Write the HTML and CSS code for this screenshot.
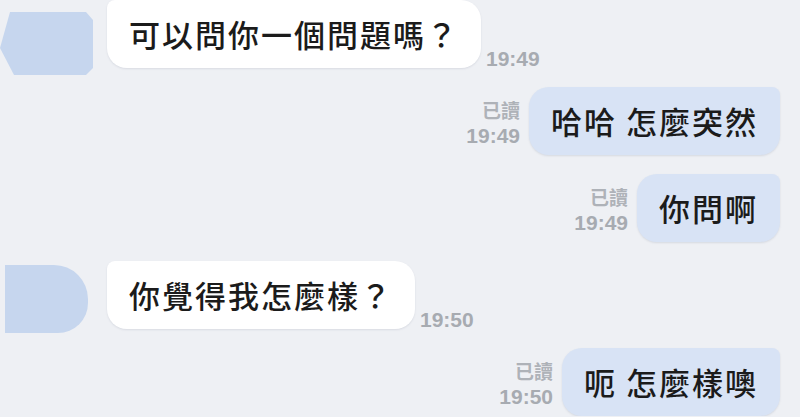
FILE: index.html
```html
<!DOCTYPE html>
<html lang="zh-Hant">
<head>
  <meta charset="UTF-8" />
  <meta name="viewport" content="width=device-width, initial-scale=1.0"/>
  <title>聊天</title>
  <link rel="stylesheet" href="styles.css">
</head>
<body>

  <div class="chat">

    <!-- incoming -->
    <div class="row in">
      <div class="avatar"><div class="blob blob-hex"></div></div>
      <div class="bubble">可以問你一個問題嗎？</div>
      <span class="time">19:49</span>
    </div>

    <!-- outgoing -->
    <div class="row out">
      <div class="meta"><span class="read">已讀</span><span class="stamp">19:49</span></div>
      <div class="bubble">哈哈 怎麼突然</div>
    </div>

    <div class="row out">
      <div class="meta"><span class="read">已讀</span><span class="stamp">19:49</span></div>
      <div class="bubble">你問啊</div>
    </div>

    <div class="row in">
      <div class="avatar"><div class="blob blob-round"></div></div>
      <div class="bubble">你覺得我怎麼樣？</div>
      <span class="time">19:50</span>
    </div>

    <div class="row out">
      <div class="meta"><span class="read">已讀</span><span class="stamp">19:50</span></div>
      <div class="bubble">呃 怎麼樣噢</div>
    </div>

  </div>

</body>
</html>
```

FILE: styles.css
```css
body {
  margin: 0;
  background: #eef0f4;
  font-family: "Noto Sans CJK TC", "Noto Sans", sans-serif;
  color: #1b1b1b;
  overflow: hidden;
}

.chat {
  display: flex;
  flex-direction: column;
  gap: 19px;
  padding: 0 20px 0 0;
}

.row {
  display: flex;
  align-items: flex-start;
}

.row.out {
  justify-content: flex-end;
  align-items: center;
}

.bubble {
  height: 68px;
  box-sizing: border-box;
  padding: 16px 22px;
  font-size: 31px;
  font-weight: 500;
  line-height: 36px;
  letter-spacing: 2px;
  border-radius: 20px;
  white-space: nowrap;
}

.in .bubble {
  background: #ffffff;
  border-top-left-radius: 8px;
  box-shadow: 0 1px 2px rgba(120, 130, 150, 0.18);
}

.out .bubble {
  background: #d8e3f5;
  border-top-right-radius: 8px;
  box-shadow: 0 1px 2px rgba(120, 130, 150, 0.2);
}

/* censored avatars */
.avatar {
  width: 107px;
  flex-shrink: 0;
}

.blob {
  background: #c6d6ee;
}

.blob-hex {
  width: 95px;
  height: 63px;
  margin: 12px 0 -7px 0;
  clip-path: polygon(10px 0, 86px 0, 93px 8px, 93px 56px, 86px 63px, 14px 63px, 0 36px);
}

.blob-round {
  width: 83px;
  height: 68px;
  margin: 4px 0 -4px 5px;
  border-radius: 0 34px 30px 0;
}

.time {
  align-self: flex-end;
  margin: 0 0 -1px 5px;
  font-family: "Liberation Sans", Arial, sans-serif;
  font-weight: bold;
  font-size: 21px;
  line-height: 20px;
  color: #a7abb1;
}

.meta {
  display: flex;
  flex-direction: column;
  align-items: flex-end;
  margin: 2px 9px 0 0;
  font-weight: bold;
  color: #aeb2b8;
}

.meta .read {
  font-size: 19px;
  line-height: 27px;
}

.meta .stamp {
  font-family: "Liberation Sans", Arial, sans-serif;
  font-size: 21px;
  line-height: 25px;
  color: #a7abb1;
}
```
